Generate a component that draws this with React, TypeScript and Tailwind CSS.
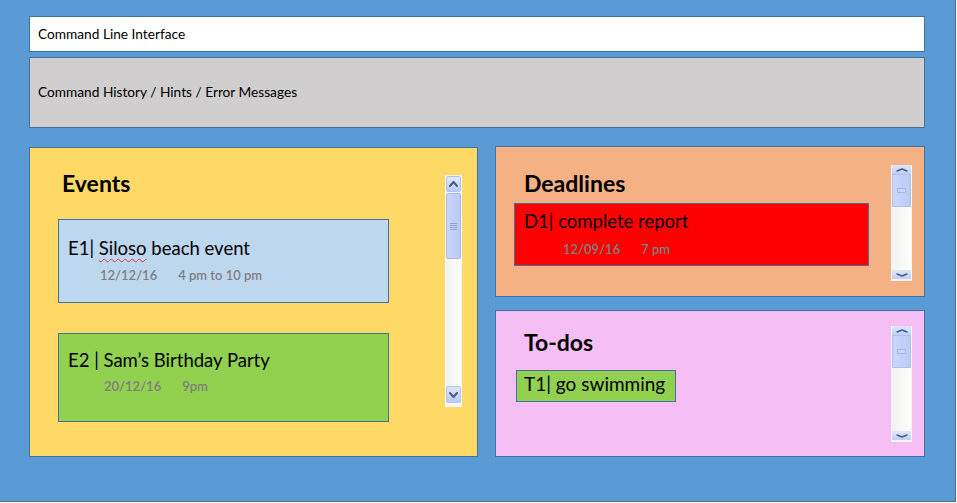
import React from "react";

const FONT = { fontFamily: "Lato, 'Open Sans', sans-serif" };

function Chevron({ up, w, h, sw }: { up?: boolean; w: number; h: number; sw: number }) {
  return (
    <svg width={w} height={h} viewBox={`0 0 ${w} ${h}`}>
      <polyline
        points={
          up
            ? `1,${h - 1} ${w / 2},1 ${w - 1},${h - 1}`
            : `1,1 ${w / 2},${h - 1} ${w - 1},1`
        }
        fill="none"
        stroke="#4a5d88"
        strokeWidth={sw}
        strokeLinejoin="round"
        strokeLinecap="round"
      />
    </svg>
  );
}

// old-style windows scrollbar, two flavours
function ScrollBar({ big }: { big?: boolean }) {
  if (big) {
    return (
      <div className="flex h-[232px] w-[17px] flex-col border border-[#f7f7f5] bg-[#f7f7f5]">
        <div className="flex h-[16px] items-center justify-center rounded-[2px] border border-[#b3c4ea] bg-gradient-to-b from-[#e1e9fb] to-[#b9cbf4]">
          <Chevron up w={9} h={6} sw={2} />
        </div>
        <div className="mt-px flex h-[66px] items-center justify-center rounded-[2px] border border-[#a9bbe6] bg-gradient-to-r from-[#c9d6f9] to-[#b8caf5]">
          <div className="flex w-[7px] flex-col gap-[1px]">
            <div className="h-px bg-[#8fa5d8]" />
            <div className="h-px bg-[#8fa5d8]" />
            <div className="h-px bg-[#8fa5d8]" />
            <div className="h-px bg-[#8fa5d8]" />
          </div>
        </div>
        <div className="flex-1 bg-gradient-to-r from-[#f1f1ef] to-[#fdfdfc]" />
        <div className="flex h-[17px] items-center justify-center rounded-[2px] border border-[#b3c4ea] bg-gradient-to-b from-[#dbe4fa] to-[#b9cbf4]">
          <Chevron w={9} h={6} sw={2} />
        </div>
        <div className="h-[3px]" />
      </div>
    );
  }
  return (
    <div className="flex h-[116px] w-[21px] flex-col bg-[#f6f6f4] px-px">
      <div className="flex h-[9px] items-center justify-center bg-gradient-to-b from-[#dfe7fb] to-[#bfd0f5]">
        <Chevron up w={12} h={4} sw={1.5} />
      </div>
      <div className="flex h-[33px] items-center justify-center border border-[#b0c2ec] bg-gradient-to-r from-[#cad7fa] to-[#bacbf6]">
        <div className="h-[5px] w-[9px] border border-[#a6b8e4] bg-[#c8d5f7]" />
      </div>
      <div className="flex-1 bg-gradient-to-r from-[#f1f1ef] to-[#fdfdfc]" />
      <div className="flex h-[9px] items-center justify-center bg-gradient-to-b from-[#dfe7fb] to-[#bfd0f5]">
        <Chevron w={12} h={4} sw={1.5} />
      </div>
      <div className="h-[2px]" />
    </div>
  );
}

function Title({ children }: { children: React.ReactNode }) {
  return <div className="text-[23px] font-bold leading-[28px] text-black">{children}</div>;
}

function Meta({ date, time, indent }: { date: string; time: string; indent: string }) {
  return (
    <div className={`flex text-[13px] font-semibold leading-[16px] text-[#7f7f7f] ${indent}`}>
      <span>{date}</span>
      <span className="ml-[21px]">{time}</span>
    </div>
  );
}

export default function App() {
  return (
    <div style={FONT} className="h-[503px] w-[957px] bg-white">
      <div className="flex h-[502px] w-[956px] flex-col border-b border-r border-[#41719c] bg-[#5b9bd5] pl-[29px] pt-[16px]">
        {/* command line */}
        <div className="flex h-[36px] w-[896px] items-center border border-[#41719c] bg-white pl-[8px] text-[13.7px] text-black">
          Command Line Interface
        </div>
        <div className="mt-[5px] flex h-[71px] w-[896px] items-center border border-[#41719c] bg-[#d0cece] pl-[8px] text-[13.7px] text-black">
          Command History / Hints / Error Messages
        </div>

        <div className="mt-[18px] flex w-[896px] items-end gap-[17px]">
          {/* events */}
          <div className="flex h-[310px] w-[449px] border border-[#41719c] bg-[#ffd966]">
            <div className="flex-1 pl-[28px] pt-[21px]">
              <div className="pl-[4px]">
                <Title>Events</Title>
              </div>
              <div className="mt-[22px] h-[84px] w-[331px] border border-[#41719c] bg-[#bdd7ee] pl-[9px] pt-[17px]">
                <div className="text-[18.5px] leading-[22px] text-black">
                  E1|{" "}
                  <span className="underline decoration-[#e2383e] decoration-wavy decoration-1 underline-offset-[3px]">
                    Siloso
                  </span>{" "}
                  beach event
                </div>
                <div className="mt-[8px]">
                  <Meta date="12/12/16" time="4 pm to 10 pm" indent="pl-[32px]" />
                </div>
              </div>
              <div className="mt-[30px] h-[89px] w-[331px] border border-[#41719c] bg-[#92d050] pl-[9px] pt-[15px]">
                <div className="text-[18.5px] leading-[22px] text-black">E2 | Sam’s Birthday Party</div>
                <div className="mt-[7px]">
                  <Meta date="20/12/16" time="9pm" indent="pl-[36px]" />
                </div>
              </div>
            </div>
            <div className="mr-[15px] mt-[27px] self-start">
              <ScrollBar big />
            </div>
          </div>

          {/* right column */}
          <div className="flex h-[311px] w-[430px] flex-col gap-[13px]">
            <div className="flex h-[151px] border border-[#41719c] bg-[#f4b183]">
              <div className="flex-1 pl-[18px] pt-[22px]">
                <div className="pl-[10px]">
                  <Title>Deadlines</Title>
                </div>
                <div className="mt-[6px] h-[63px] w-[355px] border border-[#41719c] bg-[#ff0000] pl-[9px] pt-[6px]">
                  <div className="text-[18.5px] leading-[22px] text-black">D1| complete report</div>
                  <div className="mt-[9px]">
                    <Meta date="12/09/16" time="7 pm" indent="pl-[39px]" />
                  </div>
                </div>
              </div>
              <div className="mr-[12px] mt-[18px] self-start">
                <ScrollBar />
              </div>
            </div>

            <div className="flex h-[147px] border border-[#41719c] bg-[#f5bef5]">
              <div className="flex-1 pl-[20px] pt-[17px]">
                <div className="pl-[8px]">
                  <Title>To-dos</Title>
                </div>
                <div className="mt-[14px] h-[32px] w-[160px] border border-[#41719c] bg-[#92d050] pl-[7px] pt-[1px] text-[19px] leading-[24px] text-black">
                  T1| go swimming
                </div>
              </div>
              <div className="mr-[12px] mt-[15px] self-start">
                <ScrollBar />
              </div>
            </div>
          </div>
        </div>
      </div>
    </div>
  );
}
